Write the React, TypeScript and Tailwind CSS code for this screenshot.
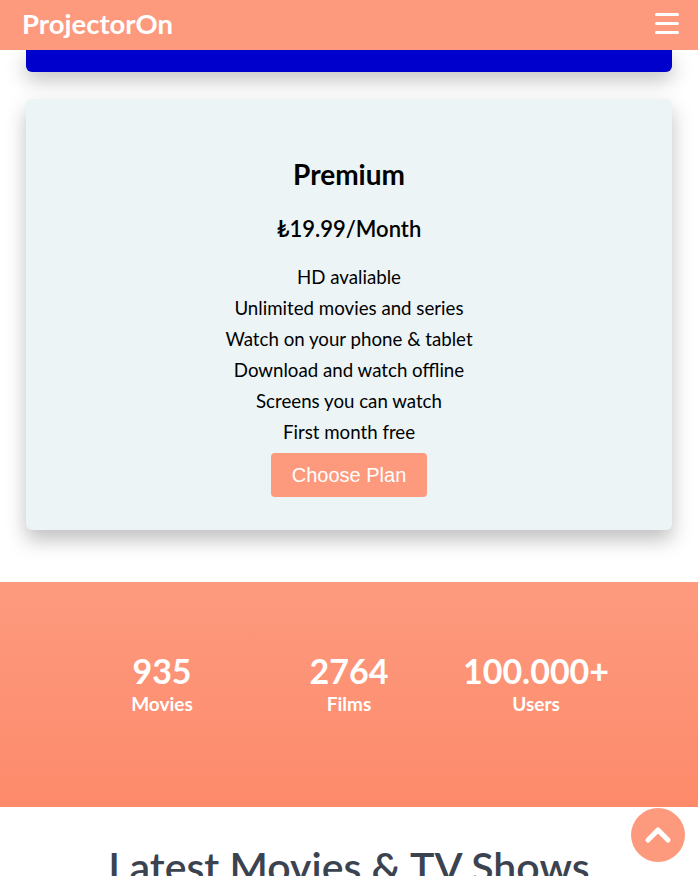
import { ChevronUp } from "lucide-react";

const features = [
  "HD avaliable",
  "Unlimited movies and series",
  "Watch on your phone & tablet",
  "Download and watch offline",
  "Screens you can watch",
  "First month free",
];

const stats = [
  { value: "935", label: "Movies" },
  { value: "2764", label: "Films" },
  { value: "100.000+", label: "Users" },
];

export default function App() {
  return (
    <div className="relative min-h-screen bg-white font-['Lato',sans-serif]">
      <header className="relative z-10 flex h-[50px] items-center justify-between bg-[#fd9a7e] pl-[22px] pr-[19px]">
        <span className="-mt-[3px] text-[27.5px] font-bold text-white">ProjectorOn</span>
        <button type="button" className="-mt-[4px] flex flex-col gap-[6px]">
          <span className="block h-[3px] w-[24px] rounded-sm bg-white" />
          <span className="block h-[3px] w-[24px] rounded-sm bg-white" />
          <span className="block h-[3px] w-[24px] rounded-sm bg-white" />
        </button>
      </header>

      <div className="px-[26px]">
        <div className="h-[22px] rounded-b-[6px] bg-[#0000cc] shadow-[0_8px_20px_rgba(0,0,0,0.25)]" />

        <div className="mt-[27px] flex flex-col items-center rounded-[6px] bg-[#ecf4f6] pb-[33px] pt-[58px] text-black shadow-[0_10px_20px_rgba(0,0,0,0.25)]">
          <h2 className="text-[28px] font-bold leading-[34px]">Premium</h2>
          <p className="mt-[24px] text-[22px] font-semibold leading-[28px]">₺19.99/Month</p>
          <ul className="mt-[19px] text-center text-[18.7px] leading-[31px]">
            {features.map((feature) => (
              <li key={feature}>{feature}</li>
            ))}
          </ul>
          <button type="button" className="mt-[5px] h-[44px] w-[156px] rounded-[4px] bg-[#fd9a7e] font-['Liberation_Sans',sans-serif] text-[20px] text-white">
            Choose Plan
          </button>
        </div>
      </div>

      <section className="mt-[52px] bg-gradient-to-b from-[#fd9a7e] to-[#fd8a6b] pb-[92px] pt-[69px] text-white">
        <div className="mx-auto grid w-[561px] grid-cols-3">
          {stats.map((stat) => (
            <div key={stat.label} className="flex flex-col items-center">
              <span className="text-[34px] font-bold leading-[40px]">{stat.value}</span>
              <span className="mt-[2px] text-[19px] font-bold leading-[22px]">{stat.label}</span>
            </div>
          ))}
        </div>
      </section>

      <section className="pt-[36px] text-center">
        <h2 className="text-[41px] font-semibold leading-[48px] text-[#3b4350]">Latest Movies &amp; TV Shows</h2>
        <div className="h-[300px]" />
      </section>

      <button type="button" className="fixed left-[631px] top-[808px] flex h-[54px] w-[54px] items-center justify-center rounded-full bg-[#fd9a7e] text-white">
        <ChevronUp size={40} strokeWidth={3} />
      </button>
    </div>
  );
}
